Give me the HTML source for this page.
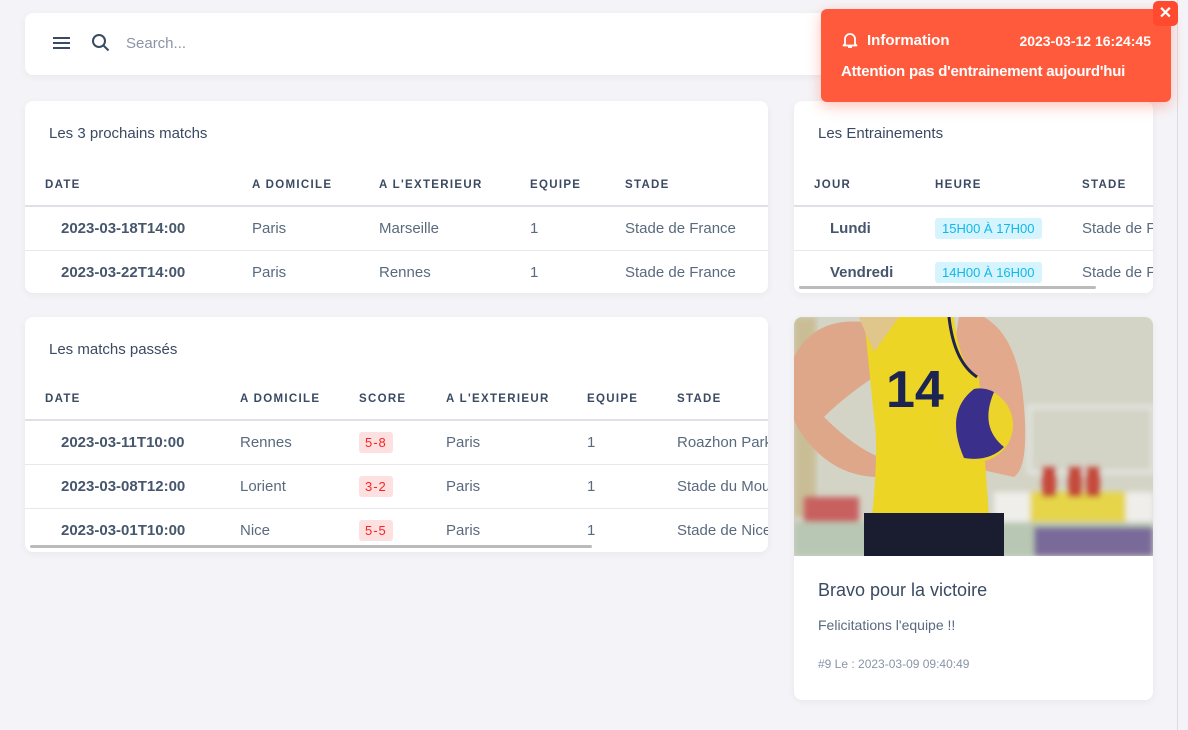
<!DOCTYPE html>
<html><head><meta charset="utf-8"><style>
*{box-sizing:border-box;margin:0;padding:0}
body{width:1188px;height:730px;background:#f4f4f8;font-family:"Liberation Sans",sans-serif;position:relative;overflow:hidden;color:#4a5a70}
.card{position:absolute;background:#fff;border-radius:8px;box-shadow:0 2px 8px rgba(0,0,0,.05);overflow:hidden}
.title{position:absolute;left:24px;top:24px;font-size:15px;color:#3a4a62}
table{position:absolute;left:0;border-collapse:collapse;white-space:nowrap}
th{font-size:11.5px;letter-spacing:1.3px;color:#3a4a62;text-align:left;font-weight:bold;height:42px;border-bottom:2px solid #dde0e6;padding:0}
td{font-size:15px;color:#5a6a7e;height:44px;border-bottom:1px solid #e6e8ec;padding:0}
td.b{font-weight:bold;color:#46566c}
.sc{display:inline-block;background:#fde1e1;color:#f22;font-size:13px;padding:3px 6px;border-radius:3px;letter-spacing:1px}
.hr{display:inline-block;background:#d6f4fd;color:#10b8ea;font-size:13px;padding:3px 7px;border-radius:3px}
.bar{position:absolute;height:3px;background:#bbb;border-radius:2px}
</style></head><body>
<div class="card" style="left:25px;top:13px;width:1128px;height:62px">
<svg style="position:absolute;left:27px;top:22px" width="20" height="16" viewBox="0 0 20 16"><path d="M1 3h17M1 8h17M1 13h17" stroke="#3a4a62" stroke-width="2"/></svg>
<svg style="position:absolute;left:66px;top:20px" width="20" height="20" viewBox="0 0 20 20"><circle cx="8" cy="8" r="6" fill="none" stroke="#3a4a62" stroke-width="2"/><path d="M12.5 12.5l5 5" stroke="#3a4a62" stroke-width="2"/></svg>
<div style="position:absolute;left:101px;top:22px;font-size:15px;color:#8a94a6">Search...</div>
</div>

<div class="card" style="left:25px;top:101px;width:743px;height:192px">
<div class="title">Les 3 prochains matchs</div>
<table style="top:63px;width:743px">
<tr><th style="padding-left:20px;width:227px">DATE</th><th style="width:127px">A DOMICILE</th><th style="width:151px">A L'EXTERIEUR</th><th style="width:95px">EQUIPE</th><th>STADE</th></tr>
<tr><td class="b" style="padding-left:36px">2023-03-18T14:00</td><td>Paris</td><td>Marseille</td><td>1</td><td>Stade de France</td></tr>
<tr><td class="b" style="padding-left:36px;border:none">2023-03-22T14:00</td><td style="border:none">Paris</td><td style="border:none">Rennes</td><td style="border:none">1</td><td style="border:none">Stade de France</td></tr>
</table></div>

<div class="card" style="left:794px;top:101px;width:359px;height:192px">
<div class="title">Les Entrainements</div>
<table style="top:63px;width:400px">
<tr><th style="padding-left:20px;width:141px">JOUR</th><th style="width:147px">HEURE</th><th>STADE</th></tr>
<tr><td class="b" style="padding-left:36px">Lundi</td><td><span class="hr">15H00 À 17H00</span></td><td>Stade de France</td></tr>
<tr><td class="b" style="padding-left:36px;border:none">Vendredi</td><td style="border:none"><span class="hr">14H00 À 16H00</span></td><td style="border:none">Stade de France</td></tr>
</table>
<div class="bar" style="left:5px;width:297px;top:185px"></div></div>

<div class="card" style="left:25px;top:317px;width:743px;height:235px">
<div class="title">Les matchs passés</div>
<table style="top:61px;width:800px">
<tr><th style="padding-left:20px;width:215px">DATE</th><th style="width:119px">A DOMICILE</th><th style="width:87px">SCORE</th><th style="width:141px">A L'EXTERIEUR</th><th style="width:90px">EQUIPE</th><th>STADE</th></tr>
<tr><td class="b" style="padding-left:36px">2023-03-11T10:00</td><td>Rennes</td><td><span class="sc">5-8</span></td><td>Paris</td><td>1</td><td>Roazhon Park</td></tr>
<tr><td class="b" style="padding-left:36px">2023-03-08T12:00</td><td>Lorient</td><td><span class="sc">3-2</span></td><td>Paris</td><td>1</td><td>Stade du Moustoir</td></tr>
<tr><td class="b" style="padding-left:36px;border:none">2023-03-01T10:00</td><td style="border:none">Nice</td><td style="border:none"><span class="sc">5-5</span></td><td style="border:none">Paris</td><td style="border:none">1</td><td style="border:none">Stade de Nice</td></tr>
</table>
<div class="bar" style="left:5px;width:562px;top:228px"></div></div>

<div class="card" style="left:794px;top:317px;width:359px;height:383px">
<svg style="position:absolute;left:0;top:0" width="359" height="239" viewBox="0 0 359 239">
<defs><filter id="bl"><feGaussianBlur stdDeviation="3"/></filter></defs>
<rect width="359" height="239" fill="#d3d4c6"/>
<rect x="0" y="0" width="22" height="200" fill="#c9bd96" filter="url(#bl)"/>
<g filter="url(#bl)">
<rect x="235" y="90" width="124" height="65" fill="none" stroke="#e4e6e2" stroke-width="4"/>
<rect x="200" y="175" width="160" height="32" fill="#efeeea"/>
<rect x="236" y="175" width="96" height="30" fill="#e6d54a"/>
<rect x="0" y="205" width="359" height="34" fill="#b8c7b4"/>
<rect x="240" y="210" width="119" height="29" fill="#7a6a9a"/>
<rect x="248" y="150" width="14" height="30" fill="#c54a3a"/><rect x="274" y="150" width="14" height="30" fill="#c54a3a"/><rect x="292" y="150" width="14" height="30" fill="#c54a3a"/>
<rect x="10" y="180" width="55" height="25" fill="#c86060"/>
</g>
<path d="M0 40 Q20 0 70 5 L80 60 Q50 80 30 100 Q60 130 85 140 L85 160 Q40 160 10 120 Q-5 100 0 90Z" fill="#dea78a"/>
<path d="M165 0 L190 0 Q225 20 230 90 Q235 150 220 160 L175 150 L160 30Z" fill="#e2a98c"/>
<path d="M70 0 L160 0 Q165 50 185 60 L195 200 L78 200 Q85 130 80 100 Z" fill="#ecd524"/>
<path d="M155 0 Q160 45 183 60" fill="none" stroke="#1f2350" stroke-width="3"/>
<path d="M65 0 Q75 25 80 35 L105 0Z" fill="#e0c68a"/>
<text x="92" y="90" font-family="Liberation Sans" font-weight="bold" font-size="52" fill="#1c2452" transform="scale(1 1)">14</text>
<circle cx="182" cy="108" r="37" fill="#ecd42a"/>
<path d="M180 72 Q150 95 170 141 Q195 145 210 130 Q185 110 200 75 Q190 70 180 72Z" fill="#3a2f8a"/>
<rect x="70" y="196" width="140" height="43" fill="#1a1d30"/>
</svg>
<div style="position:absolute;left:24px;top:263px;font-size:18px;color:#3a4a62">Bravo pour la victoire</div>
<div style="position:absolute;left:24px;top:300px;font-size:14px;color:#5a6a7e">Felicitations l'equipe !!</div>
<div style="position:absolute;left:24px;top:340px;font-size:12px;color:#8a94a6">#9 Le : 2023-03-09 09:40:49</div>
</div>

<div style="position:absolute;left:1177px;top:0;width:1px;height:730px;background:#dcdce2"></div>

<div style="position:absolute;left:821px;top:9px;width:350px;height:93px;background:#ff5a3c;border-radius:6px;box-shadow:0 4px 14px rgba(255,80,50,.35);color:#fff">
<svg style="position:absolute;left:21px;top:22px" width="16" height="18" viewBox="0 0 16 18"><path d="M3 13V8a5 5 0 0110 0v5l1.5 1.5h-13zM6 16h4" fill="none" stroke="#fff" stroke-width="1.8" stroke-linejoin="round"/></svg>
<div style="position:absolute;left:46px;top:23px;font-size:15px;font-weight:bold">Information</div>
<div style="position:absolute;right:20px;top:24px;font-size:14px;font-weight:bold">2023-03-12 16:24:45</div>
<div style="position:absolute;left:20px;top:54px;font-size:15px;font-weight:bold;letter-spacing:-0.2px">Attention pas d'entrainement aujourd'hui</div>
</div>
<div style="position:absolute;left:1153px;top:1px;width:25px;height:25px;background:#ff4a30;border-radius:5px;color:#fff;text-align:center;font:bold 16px/25px 'Liberation Sans'">✕</div>
</body></html>
